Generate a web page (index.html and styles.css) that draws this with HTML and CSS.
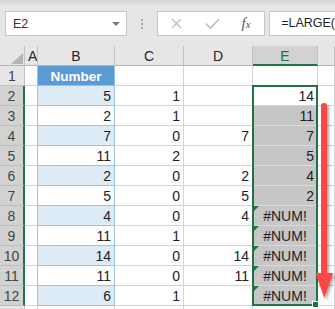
FILE: index.html
```html
<!DOCTYPE html>
<html>
<head>
	<title>LARGE</title>
<link rel="stylesheet" href="styles.css">
</head>
<body>
	<div class="toolbar">
		<div class="namebox"><span>E2</span><span class="caret"></span></div>
		<div class="grip"><i></i><i></i><i></i></div>
		<div class="fxbox">
			<svg class="icon-x" width="11" height="11" viewBox="0 0 11 11"><path d="M1 1 L10 10 M10 1 L1 10" stroke="#bdbdbd" stroke-width="1.3" fill="none"/></svg>
			<svg class="icon-ok" width="15" height="11" viewBox="0 0 15 11"><path d="M1 5.5 L5.5 10 L14 1" stroke="#bdbdbd" stroke-width="1.6" fill="none"/></svg>
			<span class="fx">f<span>x</span></span>
		</div>
		<div class="formula">=LARGE(</div>
	</div>

	<div class="sheet">
		<div class="grid">
			<div class="ch corner"></div><div class="ch">A</div><div class="ch">B</div><div class="ch">C</div><div class="ch">D</div><div class="ch on">E</div><div class="ch"></div>

			<div class="rh">1</div><div class="a"></div><div class="b head">Number</div><div></div><div></div><div></div><div></div>
			<div class="rh on">2</div><div class="a"></div><div class="b alt num">5</div><div class="num">1</div><div></div><div class="e num">14</div><div></div>
			<div class="rh on">3</div><div class="a"></div><div class="b num">2</div><div class="num">1</div><div></div><div class="e sel num">11</div><div></div>
			<div class="rh on">4</div><div class="a"></div><div class="b alt num">7</div><div class="num">0</div><div class="num">7</div><div class="e sel num">7</div><div></div>
			<div class="rh on">5</div><div class="a"></div><div class="b num">11</div><div class="num">2</div><div></div><div class="e sel num">5</div><div></div>
			<div class="rh on">6</div><div class="a"></div><div class="b alt num">2</div><div class="num">0</div><div class="num">2</div><div class="e sel num">4</div><div></div>
			<div class="rh on">7</div><div class="a"></div><div class="b num">5</div><div class="num">0</div><div class="num">5</div><div class="e sel num">2</div><div></div>
			<div class="rh on">8</div><div class="a"></div><div class="b alt num">4</div><div class="num">0</div><div class="num">4</div><div class="e sel err">#NUM!</div><div></div>
			<div class="rh on">9</div><div class="a"></div><div class="b num">11</div><div class="num">1</div><div></div><div class="e sel err">#NUM!</div><div></div>
			<div class="rh on">10</div><div class="a"></div><div class="b alt num">14</div><div class="num">0</div><div class="num">14</div><div class="e sel err">#NUM!</div><div></div>
			<div class="rh on">11</div><div class="a"></div><div class="b num">11</div><div class="num">0</div><div class="num">11</div><div class="e sel err">#NUM!</div><div></div>
			<div class="rh on">12</div><div class="a"></div><div class="b alt num">6</div><div class="num">1</div><div></div><div class="e sel err">#NUM!</div><div></div>
			<div class="rh"></div><div></div><div></div><div></div><div></div><div></div><div></div>
		</div>

		<div class="selection"><span class="handle"></span></div>

		<svg class="arrow" width="23" height="205" viewBox="0 0 23 205">
			<rect x="9" y="3" width="6" height="174" rx="3" fill="#fd4747"/>
			<polygon points="3.5,173 21,173 12.3,198" fill="#fd4747"/>
		</svg>
	</div>
</body>
</html>
```

FILE: styles.css
```css
html, body {
	margin: 0;
	padding: 0;
}

body {
	width: 335px;
	height: 309px;
	overflow: hidden;
	background: #e6e6e6;
	font-family: "Liberation Sans", Arial, sans-serif;
	color: #222;
}

/* formula bar */
.toolbar {
	height: 46px;
	box-sizing: border-box;
	padding-top: 11px;
	display: flex;
	align-items: flex-start;
	background: linear-gradient(#d3d3d3, #e6e6e6 6px);
}

.namebox {
	width: 122px;
	height: 25px;
	margin-left: 5px;
	box-sizing: border-box;
	border: 1px solid #c6c6c6;
	background: #fff;
	display: flex;
	align-items: center;
	padding-left: 7px;
	font-size: 12.5px;
	color: #333;
}

.caret {
	margin-left: auto;
	margin-right: 6px;
	width: 0;
	height: 0;
	border-left: 4px solid transparent;
	border-right: 4px solid transparent;
	border-top: 4px solid #7a7a7a;
}

.grip {
	margin-left: 14px;
	margin-top: 8px;
	display: flex;
	flex-direction: column;
	gap: 2px;
}

.grip i {
	display: block;
	width: 2px;
	height: 2px;
	background: #a9a9a9;
}

.fxbox {
	width: 109px;
	height: 25px;
	margin-left: 14px;
	box-sizing: border-box;
	border: 1px solid #c6c6c6;
	background: #fff;
	display: flex;
	align-items: center;
	padding-left: 13px;
}

.icon-ok {
	margin-left: 23px;
}

.fx {
	margin-left: 22px;
	font-family: "Liberation Serif", serif;
	font-style: italic;
	font-size: 15px;
	color: #555;
	margin-top: -1px;
}

.fx span {
	font-size: 11px;
}

.formula {
	flex: 1;
	height: 25px;
	margin-left: 4px;
	box-sizing: border-box;
	border: 1px solid #c6c6c6;
	border-right: none;
	background: #fff;
	padding-left: 11px;
	font-size: 12.5px;
	line-height: 23px;
	white-space: nowrap;
}

/* sheet */
.sheet {
	position: relative;
}

.grid {
	display: grid;
	grid-template-columns: 25px 13px 77px 69px 69px 65px 1fr;
	grid-auto-rows: 20px;
}

.grid > div {
	box-sizing: border-box;
	border-right: 1px solid #d4d4d4;
	border-bottom: 1px solid #d4d4d4;
	background: #fff;
	font-size: 14px;
	line-height: 19px;
	padding: 1px 3px 0;
	white-space: nowrap;
	overflow: hidden;
}

.grid > .ch {
	background: #e6e6e6;
	border-right-color: #c2c2c2;
	border-bottom-color: #b6b6b6;
	text-align: center;
	color: #262626;
	padding-top: 0;
	line-height: 20px;
}

.grid > .ch.on {
	background: #d2d2d2;
	color: #217346;
	border-bottom: 2px solid #217346;
}

.corner {
	position: relative;
}

.corner::after {
	content: "";
	position: absolute;
	right: 1px;
	bottom: 1px;
	border-left: 12px solid transparent;
	border-bottom: 11px solid #b4b4b4;
}

.grid > .rh {
	background: #e6e6e6;
	border-right-color: #c2c2c2;
	border-bottom-color: #c6c6c6;
	text-align: center;
	color: #444;
	padding: 1px 0 0;
}

.grid > .rh.on {
	background: #d2d2d2;
	border-bottom-color: #bdbdbd;
	border-right: 2px solid #217346;
	color: #3b4a41;
}

.grid > .a {
	border-right-color: #9bc2e6;
}

.grid > .b {
	border-right-color: #9bc2e6;
	border-bottom-color: #9bc2e6;
}

.grid > .b.alt {
	background: #ddebf7;
}

.grid > .b.head {
	background: #5b9bd5;
	color: #fff;
	font-weight: bold;
	text-align: center;
	font-size: 13.5px;
}

.num {
	text-align: right;
}

.grid > .e.sel {
	background: #c6c6c6;
	border-bottom-color: #dadada;
}

.err {
	position: relative;
	text-align: center;
}

.err::before {
	content: "";
	position: absolute;
	left: 1px;
	top: 0;
	border-top: 5px solid #217346;
	border-right: 5px solid transparent;
}

/* overlays */
.selection {
	position: absolute;
	left: 252px;
	top: 39px;
	width: 66px;
	height: 221px;
	box-sizing: border-box;
	border: 2px solid #217346;
}

.handle {
	position: absolute;
	left: 58px;
	top: 214px;
	width: 5px;
	height: 5px;
	background: #217346;
	border: 1px solid #fff;
}

.arrow {
	position: absolute;
	left: 312px;
	top: 54px;
	filter: drop-shadow(2px 2px 1.5px rgba(0, 0, 0, 0.35));
}
```
